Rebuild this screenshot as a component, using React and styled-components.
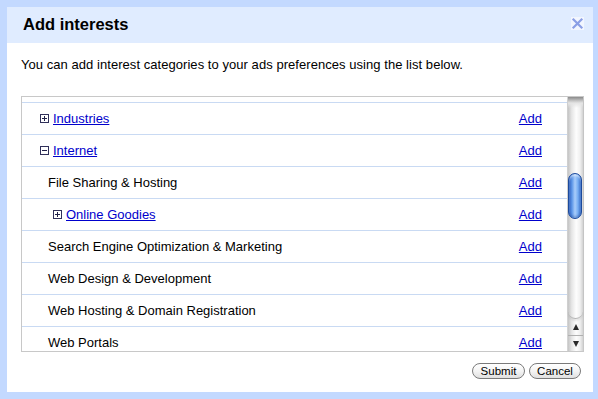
import React from "react";
import styled, { createGlobalStyle } from "styled-components";

const GlobalStyle = createGlobalStyle`
  html, body { margin: 0; padding: 0; background: #c3d9ff; }
  body { font-family: "Liberation Sans", Arial, sans-serif; }
  * { box-sizing: border-box; }
`;

const Frame = styled.div`
  width: 598px;
  height: 399px;
  padding: 7px 5px 7px 7px;
  background: #c3d9ff;
`;

const Dialog = styled.div`
  height: 100%;
  background: #fff;
  display: flex;
  flex-direction: column;
`;

const TitleBar = styled.div`
  height: 36px;
  flex: none;
  background: #e0ecff;
  display: flex;
  align-items: flex-start;
  justify-content: space-between;
  padding: 0 9px 0 16px;
`;

const Title = styled.h2`
  margin: 0;
  padding-top: 8px;
  font-family: "Liberation Sans", Arial, sans-serif;
  font-weight: bold;
  font-size: 16.5px;
  line-height: 19px;
  color: #000;
`;

const CloseButton = styled.button`
  margin-top: 10px;
  width: 13px;
  height: 13px;
  padding: 0;
  border: none;
  background: #f2f6ff;
  display: flex;
  align-items: center;
  justify-content: center;
  cursor: pointer;
`;

const Body = styled.div`
  flex: 1;
  display: flex;
  flex-direction: column;
  padding: 14px 9px 0 14px;
`;

const Description = styled.p`
  margin: 0 0 23px;
  font-size: 13px;
  line-height: 16px;
  letter-spacing: 0.05px;
  color: #000;
`;

const ListBox = styled.div`
  height: 256px;
  border: 1px solid #c8c8c8;
  display: flex;
`;

const Viewport = styled.div`
  flex: 1;
  overflow: hidden;
  display: flex;
  flex-direction: column;
`;

const PartialRow = styled.div`
  height: 5px;
  flex: none;
`;

const Row = styled.div`
  height: 32px;
  flex: none;
  border-top: 1px solid #c9daf3;
  display: flex;
  align-items: center;
  padding-left: ${(p) => p.$indent}px;
  padding-right: 25px;
  font-size: 13px;
  line-height: 16px;
  color: #000;
`;

const Toggle = styled.span`
  width: 9px;
  height: 9px;
  border: 1px solid #30305a;
  margin-right: 4px;
  flex: none;
  display: inline-grid;
  place-items: center;
  & > * { grid-area: 1 / 1; }
`;

const Bar = styled.span`
  display: block;
  background: #202048;
  width: ${(p) => (p.$vertical ? 1 : 5)}px;
  height: ${(p) => (p.$vertical ? 5 : 1)}px;
`;

const Link = styled.a`
  color: #0000cc;
  text-decoration: underline;
  cursor: pointer;
`;

const Label = styled.span``;

const AddLink = styled(Link)`
  margin-left: auto;
`;

const Scrollbar = styled.div`
  width: 16px;
  flex: none;
  display: flex;
  flex-direction: column;
  border-left: 1px solid #d4d4d4;
  background: linear-gradient(90deg, #c4c4c4 0%, #e6e6e6 25%, #fdfdfd 55%, #f0f0f0 80%, #d2d2d2 100%);
`;

const Track = styled.div`
  flex: 1;
  display: flex;
  flex-direction: column;
  border-radius: 0 0 8px 8px;
  border-bottom: 1px solid #b4b4b4;
  box-shadow: 0 2px 2px rgba(0, 0, 0, 0.08);
  background: linear-gradient(180deg, #8a8a8a 0px, #b9b9b9 3px, #e4e4e4 6px, rgba(255,255,255,0) 11px);
`;

const Thumb = styled.div`
  margin: ${(p) => p.$offset}px 1px 0 0;
  height: 46px;
  border-radius: 7px;
  border: 1px solid #1c4a9c;
  background: linear-gradient(90deg, #2a5fc0 0%, #5e97e8 25%, #a9cdfa 50%, #75acf2 75%, #2d66c6 100%);
  box-shadow: inset 0 2px 2px rgba(255,255,255,0.5), inset 0 -2px 2px rgba(0,40,120,0.25);
`;

const ArrowButton = styled.div`
  height: 16px;
  flex: none;
  display: flex;
  align-items: center;
  justify-content: center;
  border-top: ${(p) => (p.$divider ? "1px solid #b0b0b0" : "none")};
`;

const Arrow = styled.span`
  width: 0;
  height: 0;
  border-left: 3.5px solid transparent;
  border-right: 3.5px solid transparent;
  ${(p) =>
    p.$up
      ? "border-bottom: 6px solid #2a2a2a;"
      : "border-top: 6px solid #2a2a2a;"}
`;

const Footer = styled.div`
  display: flex;
  justify-content: flex-end;
  gap: 4px;
  padding: 11px 3px 0 0;
`;

const PillButton = styled.button`
  width: ${(p) => p.$w}px;
  height: 16px;
  padding: 0;
  border: 1px solid #7a7a7a;
  border-radius: 8px;
  background: linear-gradient(180deg, #ffffff 0%, #f4f4f4 50%, #e0e0e0 100%);
  font-family: "Liberation Sans", Arial, sans-serif;
  font-size: 11.5px;
  line-height: 14px;
  color: #000;
  cursor: pointer;
  white-space: nowrap;
  overflow: visible;
`;

const items = [
  { label: "Industries", indent: 18, toggle: "plus" },
  { label: "Internet", indent: 18, toggle: "minus" },
  { label: "File Sharing & Hosting", indent: 26 },
  { label: "Online Goodies", indent: 31, toggle: "plus" },
  { label: "Search Engine Optimization & Marketing", indent: 26 },
  { label: "Web Design & Development", indent: 26 },
  { label: "Web Hosting & Domain Registration", indent: 26 },
  { label: "Web Portals", indent: 26 },
];

function ToggleIcon({ kind }) {
  return (
    <Toggle>
      <Bar />
      {kind === "plus" && <Bar $vertical />}
    </Toggle>
  );
}

export default function App() {
  return (
    <>
      <GlobalStyle />
      <Frame>
        <Dialog>
          <TitleBar>
            <Title>Add interests</Title>
            <CloseButton aria-label="Close">
              <svg width="13" height="13" viewBox="0 0 13 13">
                <path d="M2.5 2.5 L10.5 10.5 M10.5 2.5 L2.5 10.5" stroke="#8b9fe6" strokeWidth="2.2" strokeLinecap="square" fill="none" />
              </svg>
            </CloseButton>
          </TitleBar>
          <Body>
            <Description>
              You can add interest categories to your ads preferences using the list below.
            </Description>
            <ListBox>
              <Viewport>
                <PartialRow />
                {items.map((it) => (
                  <Row key={it.label} $indent={it.indent}>
                    {it.toggle ? (
                      <>
                        <ToggleIcon kind={it.toggle} />
                        <Link>{it.label}</Link>
                      </>
                    ) : (
                      <Label>{it.label}</Label>
                    )}
                    <AddLink>Add</AddLink>
                  </Row>
                ))}
              </Viewport>
              <Scrollbar>
                <Track>
                  <Thumb $offset={76} />
                </Track>
                <ArrowButton>
                  <Arrow $up />
                </ArrowButton>
                <ArrowButton $divider>
                  <Arrow />
                </ArrowButton>
              </Scrollbar>
            </ListBox>
            <Footer>
              <PillButton $w={53}>Submit</PillButton>
              <PillButton $w={52}>Cancel</PillButton>
            </Footer>
          </Body>
        </Dialog>
      </Frame>
    </>
  );
}
